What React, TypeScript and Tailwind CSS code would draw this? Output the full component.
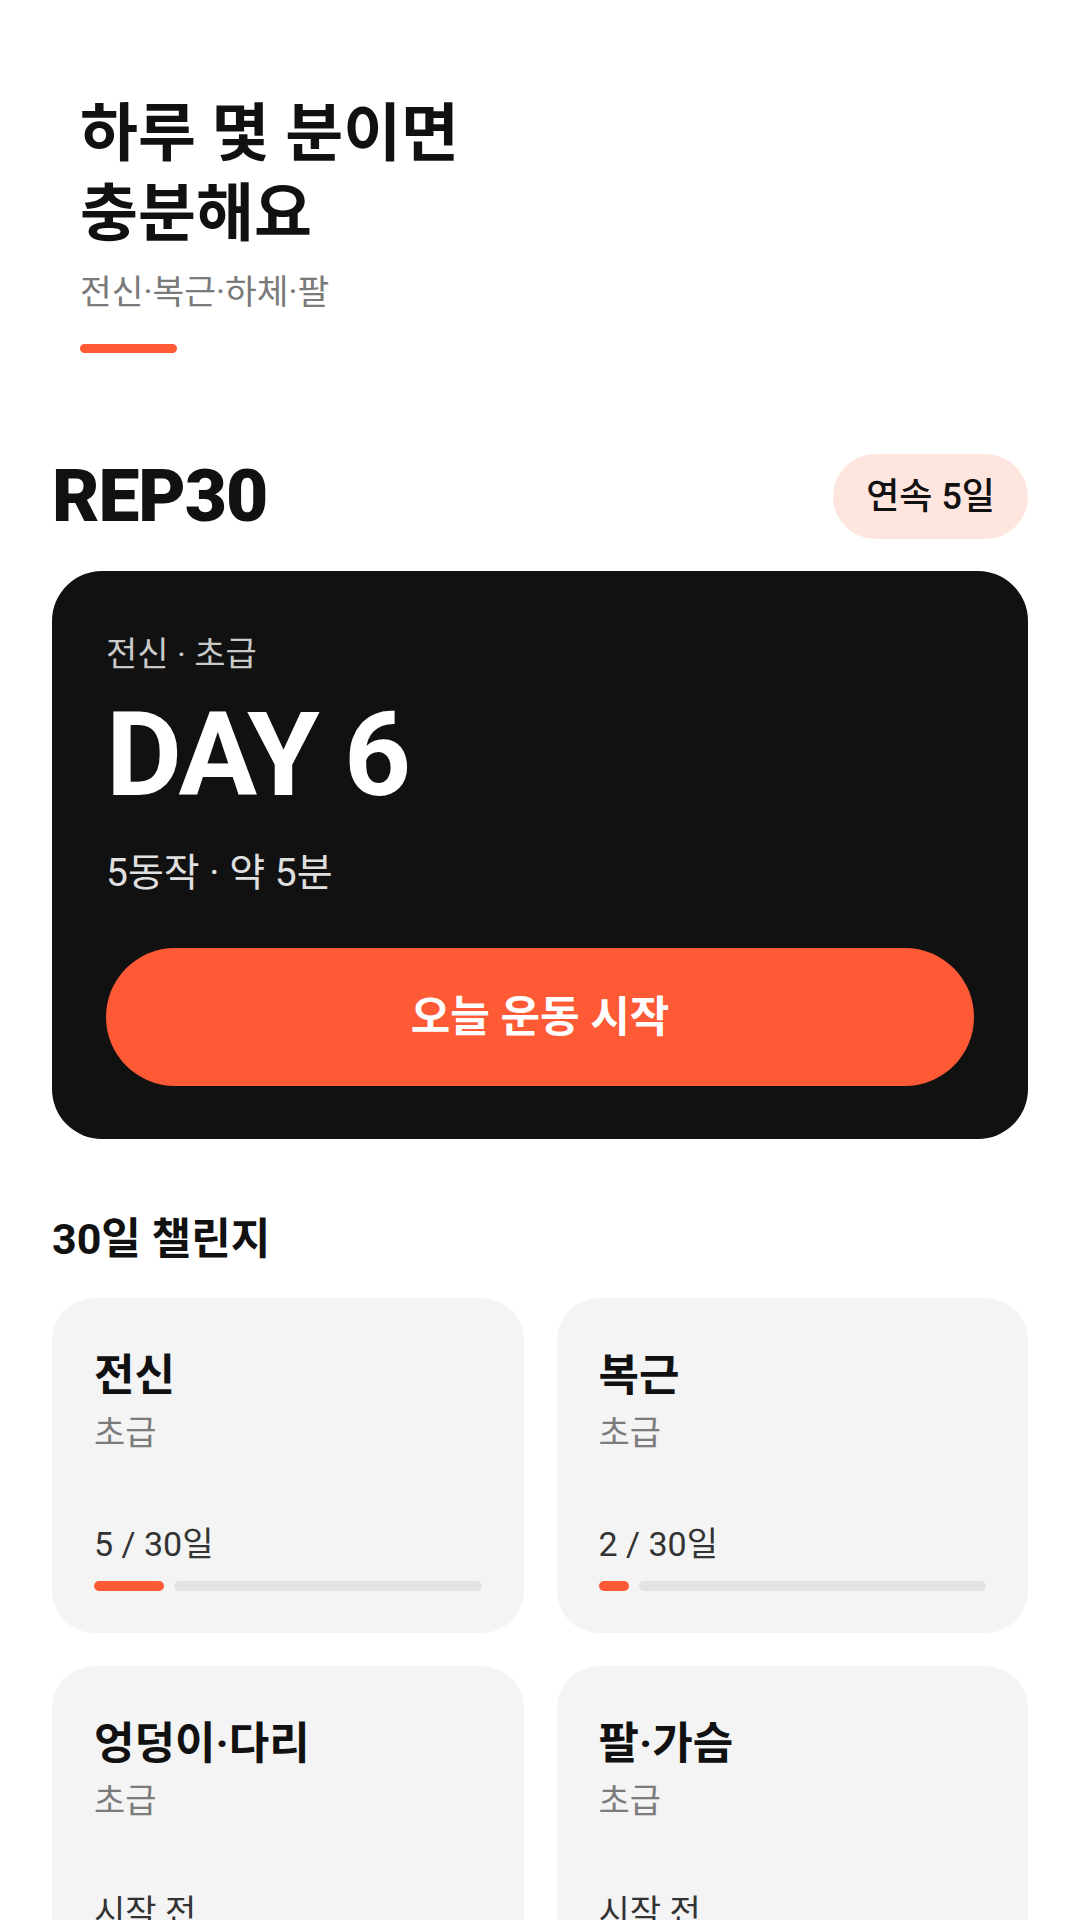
import React from "react";

type Challenge = {
  title: string;
  level: string;
  done: number;
  total: number;
};

const challenges: Challenge[] = [
  { title: "전신", level: "초급", done: 5, total: 30 },
  { title: "복근", level: "초급", done: 2, total: 30 },
  { title: "엉덩이·다리", level: "초급", done: 0, total: 30 },
  { title: "팔·가슴", level: "초급", done: 0, total: 30 },
];

function ChallengeCard({ item }: { item: Challenge }) {
  const started = item.done > 0;
  const pct = (item.done / item.total) * 100;
  return (
    <div className="flex h-[335px] flex-col rounded-[42px] bg-[#f4f4f4] px-[42px] pt-[50px] pb-[42px]">
      <div className="text-[44px] font-bold leading-[56px] text-[#111111]">{item.title}</div>
      <div className="mt-[7px] text-[34px] leading-[44px] text-[#7c7c7c]">{item.level}</div>
      <div className="mt-auto text-[34px] leading-[44px] text-[#333333]">
        {started ? `${item.done} / ${item.total}일` : "시작 전"}
      </div>
      <div className="mt-[15px] flex h-[10px] gap-[10px]">
        {started && (
          <div
            className="h-full rounded-full bg-[#ff5a36]"
            style={{ width: `calc(${pct}% + 5px)` }}
          />
        )}
        <div className="h-full flex-1 rounded-full bg-[#e3e3e3]" />
      </div>
    </div>
  );
}

export default function App() {
  return (
    <div
      className="h-[1920px] w-[1080px] overflow-hidden bg-white"
      style={{ fontFamily: 'Roboto, "Noto Sans CJK KR", sans-serif' }}
    >
      {/* Intro */}
      <div className="px-[80px] pt-[94px]">
        <h1 className="text-[63px] font-bold leading-[80px] text-[#111111]">
          하루 몇 분이면
          <br />
          충분해요
        </h1>
        <p className="mt-[16px] text-[34.5px] leading-[44px] text-[#7a7a7a]">전신·복근·하체·팔</p>
        <div className="mt-[30px] h-[9px] w-[97px] rounded-full bg-[#ff5a36]" />
      </div>

      <div className="px-[52px] pt-[101px]">
        {/* Brand row */}
        <div className="flex items-center justify-between">
          <div className="text-[73px] font-black leading-none tracking-[-0.015em] text-[#111111]">
            REP30
          </div>
          <div className="flex h-[85px] items-center rounded-full bg-[#fee5de] px-[33px] text-[36px] font-medium text-[#111111]">
            연속 5일
          </div>
        </div>

        {/* Today card */}
        <div className="mt-[32px] rounded-[50px] bg-[#111111] px-[54px] pt-[61px] pb-[53px]">
          <div className="text-[34px] leading-[44px] text-[#c9c9c9]">전신 · 초급</div>
          <div className="mt-[20px] text-[117px] font-bold leading-[118px] tracking-[-0.02em] text-white">
            DAY 6
          </div>
          <div className="mt-[34px] text-[39px] leading-[50px] text-[#e0e0e0]">5동작 · 약 5분</div>
          <button className="mt-[50px] flex h-[138px] w-full items-center justify-center rounded-full bg-[#ff5a36] text-[43px] font-bold text-white">
            오늘 운동 시작
          </button>
        </div>

        {/* 30 day challenges */}
        <h2 className="mt-[72px] text-[43px] font-bold leading-[56px] text-[#111111]">30일 챌린지</h2>
        <div className="mt-[31px] grid grid-cols-2 gap-[33px]">
          {challenges.map((c) => (
            <ChallengeCard key={c.title} item={c} />
          ))}
        </div>
      </div>
    </div>
  );
}
